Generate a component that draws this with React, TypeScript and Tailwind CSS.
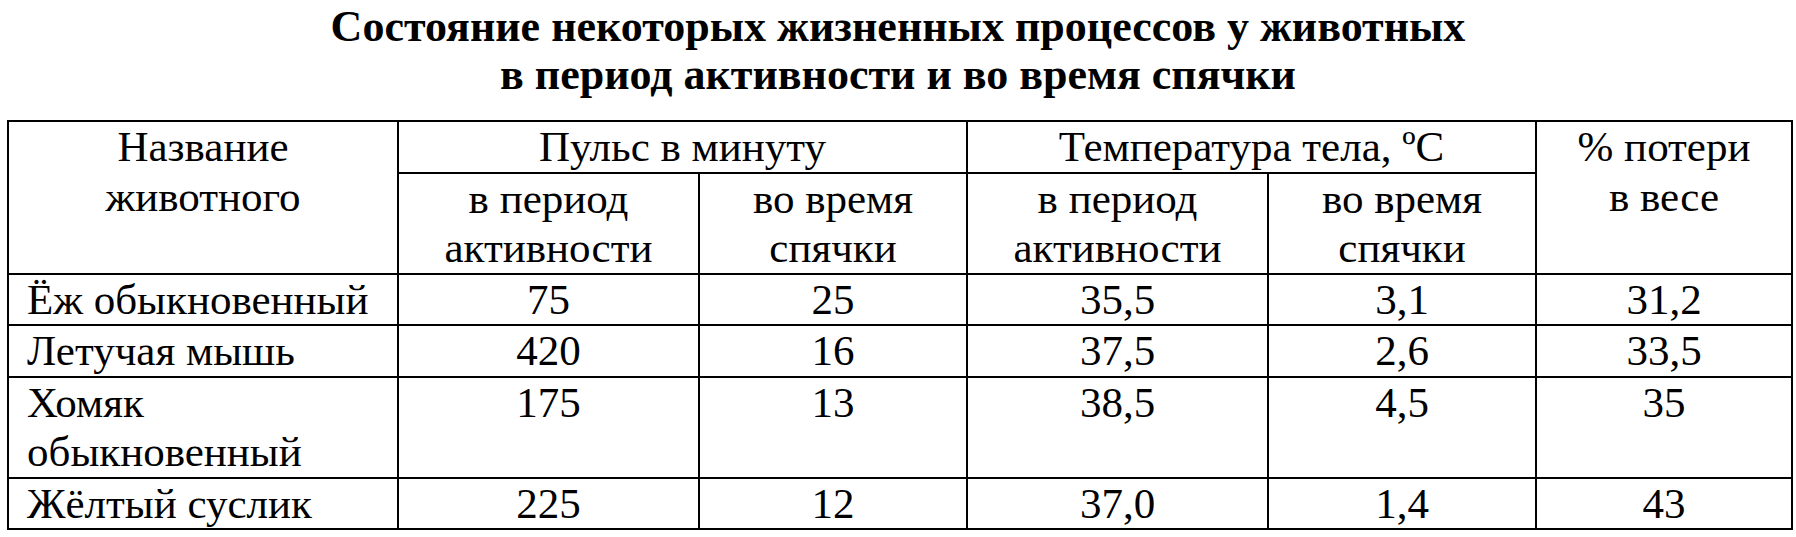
import React from "react";

const rows: { name: React.ReactNode; vals: string[] }[] = [
  { name: "Ёж обыкновенный", vals: ["75", "25", "35,5", "3,1", "31,2"] },
  { name: "Летучая мышь", vals: ["420", "16", "37,5", "2,6", "33,5"] },
  {
    name: (
      <>
        Хомяк
        <br />
        обыкновенный
      </>
    ),
    vals: ["175", "13", "38,5", "4,5", "35"],
  },
  { name: "Жёлтый суслик", vals: ["225", "12", "37,0", "1,4", "43"] },
];

const cell =
  "border-2 border-black p-0 align-top text-center font-normal [font-family:Liberation_Serif,Times_New_Roman,serif] text-[43px] leading-[49.5px] text-black";

export default function App() {
  return (
    <div className="w-[1796px] h-[537px] bg-white text-black [font-family:Liberation_Serif,Times_New_Roman,serif] overflow-hidden">
      <h1 className="pt-[3px] text-center font-bold text-[44px] leading-[48px] [font-family:Liberation_Serif,Times_New_Roman,serif]">
        Состояние некоторых жизненных процессов у животных
        <br />
        в период активности и во время спячки
      </h1>
      <table className="mt-[21px] ml-[7px] w-[1784px] table-fixed border-collapse [font-family:Liberation_Serif,Times_New_Roman,serif] text-[43px] leading-[49.5px]">
        <colgroup>
          <col className="w-[390px]" />
          <col className="w-[301px]" />
          <col className="w-[268px]" />
          <col className="w-[301px]" />
          <col className="w-[268px]" />
          <col className="w-[256px]" />
        </colgroup>
        <thead>
          <tr>
            <th rowSpan={2} className={cell}>
              Название
              <br />
              животного
            </th>
            <th colSpan={2} className={cell}>
              Пульс в минуту
            </th>
            <th colSpan={2} className={cell}>
              Температура тела, ºС
            </th>
            <th rowSpan={2} className={cell}>
              % потери
              <br />в весе
            </th>
          </tr>
          <tr>
            <th className={cell}>
              в период
              <br />
              активности
            </th>
            <th className={cell}>
              во время
              <br />
              спячки
            </th>
            <th className={cell}>
              в период
              <br />
              активности
            </th>
            <th className={cell}>
              во время
              <br />
              спячки
            </th>
          </tr>
        </thead>
        <tbody>
          {rows.map((r, i) => (
            <tr key={i}>
              <td className="border-2 border-black p-0 pl-[18px] align-top text-left whitespace-nowrap [font-family:Liberation_Serif,Times_New_Roman,serif] text-[43px] leading-[49.5px] text-black">
                {r.name}
              </td>
              {r.vals.map((v, j) => (
                <td key={j} className={cell}>
                  {v}
                </td>
              ))}
            </tr>
          ))}
        </tbody>
      </table>
    </div>
  );
}
